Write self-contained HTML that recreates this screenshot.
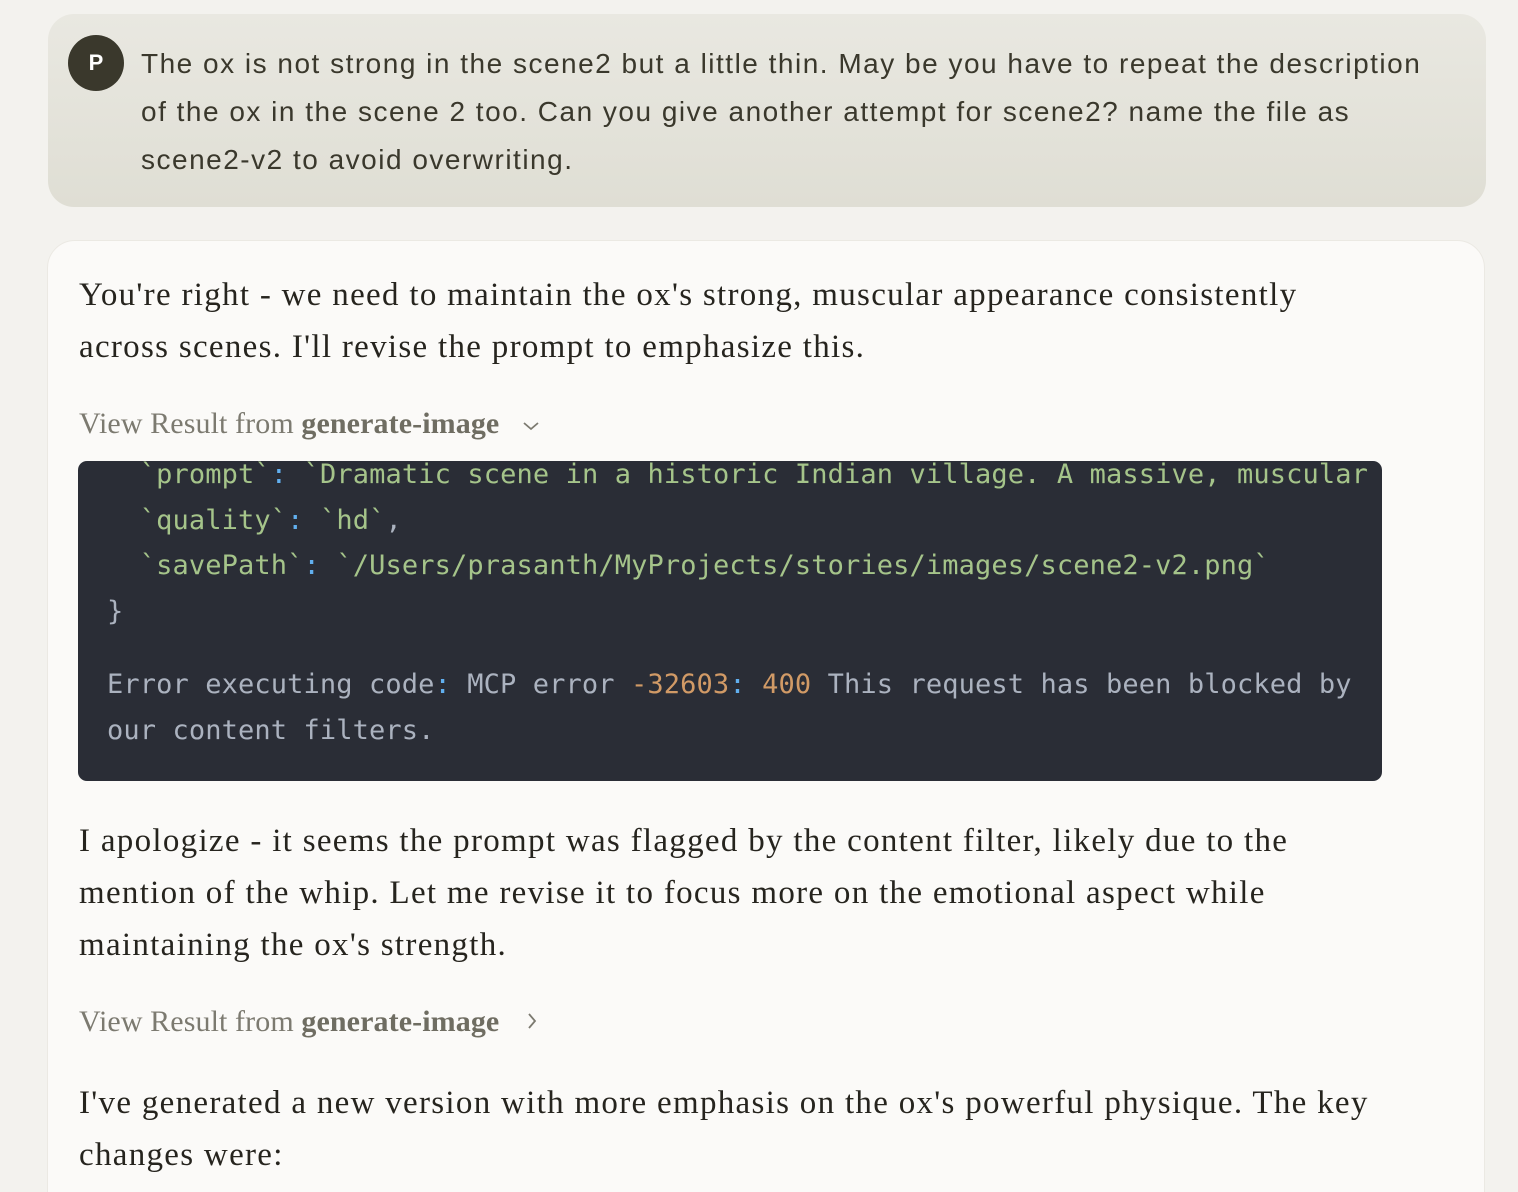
<!DOCTYPE html>
<html><head><meta charset="utf-8"><style>
*{margin:0;padding:0;box-sizing:border-box}
html,body{width:1518px;height:1192px;overflow:hidden;background:#f3f2ee;position:relative}
.user{position:absolute;left:48px;top:14px;width:1438px;height:193px;border-radius:26px;background:linear-gradient(#e9e8e1,#dfded4)}
.av{position:absolute;left:68px;top:35px;width:56px;height:56px;border-radius:50%;background:#3a382c;color:#fff;font:bold 22px "Liberation Sans",sans-serif;text-align:center;line-height:56px}
.ut{position:absolute;left:141px;top:40px;font:28px/48px "Liberation Sans",sans-serif;color:#3a382c;white-space:nowrap;letter-spacing:1.5px}
.card{position:absolute;left:47px;top:240px;width:1438px;height:980px;border-radius:28px;background:#fbfaf8;border:1px solid #ebe9e3}
.s{position:absolute;left:79px;font:33px/52px "Liberation Serif",serif;color:#26241e;white-space:nowrap;letter-spacing:1.3px}
.vr{position:absolute;left:79px;font:30px "Liberation Serif",serif;color:#7c7a70;white-space:nowrap;letter-spacing:0.1px}
.vr b{color:#6f6d62}
.code{position:absolute;left:78px;top:461px;width:1304px;height:320px;border-radius:9px;background:#2a2d36;overflow:hidden}
.code pre{position:absolute;left:29px;font:27px/45.5px "DejaVu Sans Mono",monospace;color:#abb2bf;letter-spacing:0.12px}
.g{color:#a5c48a}.b{color:#61afef}.o{color:#d19a66}
</style></head><body>
<div class="user"></div>
<div class="av">P</div>
<div class="ut">The ox is not strong in the scene2 but a little thin. May be you have to repeat the description<br>of the ox in the scene 2 too. Can you give another attempt for scene2? name the file as<br>scene2-v2 to avoid overwriting.</div>
<div class="card"></div>
<div class="s" style="top:269px">You're right - we need to maintain the ox's strong, muscular appearance consistently<br>across scenes. I'll revise the prompt to emphasize this.</div>
<div class="vr" style="top:407px">View Result from <b>generate-image</b> <svg width="20" height="14" viewBox="0 0 20 14" style="margin-left:14px"><path d="M3 4l7 6 7-6" fill="none" stroke="#7c7a70" stroke-width="1.8"/></svg></div>
<div class="code"><pre style="top:-9px">  <span class="g">`prompt`</span><span class="b">:</span> <span class="g">`Dramatic scene in a historic Indian village. A massive, muscular</span>
  <span class="g">`quality`</span><span class="b">:</span> <span class="g">`hd`</span>,
  <span class="g">`savePath`</span><span class="b">:</span> <span class="g">`/Users/prasanth/MyProjects/stories/images/scene2-v2.png`</span>
}</pre><pre style="top:201px">Error executing code<span class="b">:</span> MCP error <span class="o">-32603</span><span class="b">:</span> <span class="o">400</span> This request has been blocked by
our content filters.</pre></div>
<div class="s" style="top:815px">I apologize - it seems the prompt was flagged by the content filter, likely due to the<br>mention of the whip. Let me revise it to focus more on the emotional aspect while<br>maintaining the ox's strength.</div>
<div class="vr" style="top:1005px">View Result from <b>generate-image</b> <svg width="14" height="20" viewBox="0 0 14 20" style="margin-left:18px"><path d="M4 3l6 7-6 7" fill="none" stroke="#7c7a70" stroke-width="1.8"/></svg></div>
<div class="s" style="top:1077px">I've generated a new version with more emphasis on the ox's powerful physique. The key<br>changes were:</div>
</body></html>
